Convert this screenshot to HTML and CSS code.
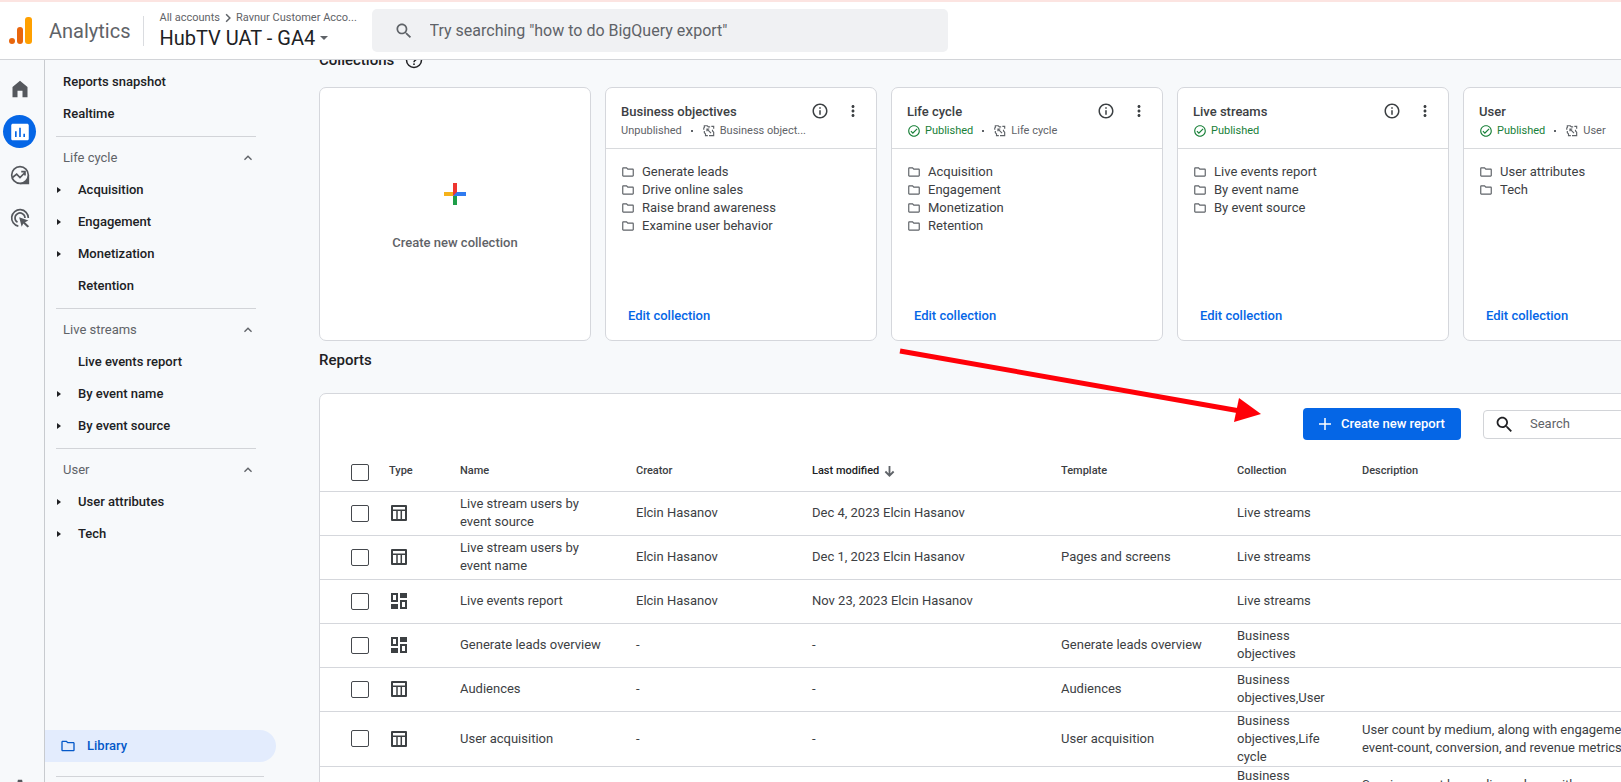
FILE: index.html
```html
<!DOCTYPE html>
<html lang="en">
<head>
  <meta charset="UTF-8">
  <meta name="viewport" content="width=device-width, initial-scale=1.0">
  <title>Analytics | Library</title>
  <link rel="stylesheet" href="styles.css">
</head>
<body>

  <!-- Icons -->
  <svg class="sprite" aria-hidden="true">
    <symbol id="folder" viewBox="0 0 24 24"><path d="M9.2 6l2 2H20v10H4V6h5.2M10 4H4c-1.100 0-2 .9-2 2v12c0 1.100.9 2 2 2h16c1.100 0 2-.9 2-2V8c0-1.100-.9-2-2-2h-8l-2-2z"/></symbol>
    <symbol id="info" viewBox="0 0 24 24"><path d="M11 7h2v2h-2zm0 4h2v6h-2zm1-9C6.480 2 2 6.480 2 12s4.480 10 10 10 10-4.480 10-10S17.520 2 12 2zm0 18c-4.410 0-8-3.590-8-8s3.590-8 8-8 8 3.590 8 8-3.590 8-8 8z"/></symbol>
    <symbol id="more" viewBox="0 0 24 24"><path d="M12 8c1.100 0 2-.9 2-2s-.9-2-2-2-2 .9-2 2 .9 2 2 2zm0 2c-1.100 0-2 .9-2 2s.9 2 2 2 2-.9 2-2-.9-2-2-2zm0 6c-1.100 0-2 .9-2 2s.9 2 2 2 2-.9 2-2-.9-2-2-2z"/></symbol>
    <symbol id="check" viewBox="0 0 24 24"><path d="M12 2C6.480 2 2 6.480 2 12s4.480 10 10 10 10-4.480 10-10S17.520 2 12 2zm0 18c-4.410 0-8-3.590-8-8s3.590-8 8-8 8 3.590 8 8-3.590 8-8 8zm4.590-12.420L10 14.170l-2.590-2.580L6 13l4 4 8-8z"/></symbol>
    <symbol id="linked" viewBox="0 0 24 24"><g fill="none" stroke="currentColor" stroke-width="2"><path d="M3 10V7l1-1V3h5l2 2h3M16 4h4v4M4 12v3l2 2v3h4M12 20h8v-6l-2-2v-2"/><path d="M9.500 9.500l6 6M8.500 12.500v-4h4"/></g></symbol>
    <symbol id="search" viewBox="0 0 24 24"><path d="M15.500 14h-.79l-.28-.27C15.410 12.590 16 11.110 16 9.500 16 5.910 13.090 3 9.500 3S3 5.910 3 9.500 5.910 16 9.500 16c1.610 0 3.090-.59 4.230-1.570l.27.28v.79l5 4.990L20.490 19l-4.990-5zm-6 0C7.010 14 5 11.990 5 9.500S7.010 5 9.500 5 14 7.010 14 9.500 11.990 14 9.500 14z"/></symbol>
    <symbol id="up" viewBox="0 0 24 24"><path d="M12 8l-6 6 1.410 1.410L12 10.830l4.590 4.580L18 14z"/></symbol>
    <symbol id="table" viewBox="0 0 18 18"><path fill="none" stroke="currentColor" stroke-width="2" stroke-linejoin="round" d="M2 2h14v14H2z"/><path fill="none" stroke="currentColor" stroke-width="1.500" d="M2 6.300h14M7 6v10M11.300 6v10"/></symbol>
    <symbol id="overview" viewBox="0 0 18 18"><path d="M10 1h7v5h-7zM1 12h7v5H1z"/><path fill="none" stroke="currentColor" stroke-width="2" d="M2 2h5v7H2zM11 9h5v7h-5z"/></symbol>
  </svg>

  <header class="topbar">
    <a class="brand" href="#">
      <svg class="logo" viewBox="0 0 24 28" aria-hidden="true">
        <rect x="16" y="0" width="7" height="27" rx="3" fill="#ffa000"/>
        <rect x="8" y="10" width="6" height="17" rx="3" fill="#e8660d"/>
        <circle cx="3" cy="24" r="3" fill="#e8660d"/>
      </svg>
      <span>Analytics</span>
    </a>
    <div class="account">
      <div class="crumbs">
        <a href="#">All accounts</a>
        <svg viewBox="0 0 8 12" aria-hidden="true"><path d="M1.500 1l5 5-5 5" fill="none" stroke="currentColor" stroke-width="2"/></svg>
        <a href="#">Ravnur Customer Acco...</a>
      </div>
      <button class="property">HubTV UAT - GA4
        <svg viewBox="0 0 8 4" aria-hidden="true"><path d="M0 0h8L4 4z"/></svg>
      </button>
    </div>
    <label class="global-search">
      <svg aria-hidden="true"><use href="#search"/></svg>
      <input type="search" aria-label="Search Analytics" placeholder="Try searching &quot;how to do BigQuery export&quot;">
    </label>
  </header>

  <div class="layout">
    <nav class="rail" aria-label="Main">
      <a href="#" aria-label="Home"><svg viewBox="0 0 24 24"><path d="M3 9.500L12 2l9 7.500V22h-6v-8H9v8H3z"/></svg></a>
      <a class="active" href="#" aria-label="Reports"><svg viewBox="0 0 24 24"><path fill-rule="evenodd" d="M3.500 2h17c1 0 2 .8 2 2v16c0 1.200-1 2-2 2h-17c-1 0-2-.8-2-2V4c0-1.200 1-2 2-2zM6 11v7h2v-7zm5-4v11h2V7zm5 7v4h2v-4z"/></svg></a>
      <a href="#" aria-label="Explore"><svg viewBox="0 0 24 24"><path d="M22 12v10H12" stroke="currentColor" stroke-width="2"/><circle cx="12" cy="12" r="10" fill="#f7f9fb" stroke="currentColor" stroke-width="2"/><path fill="none" stroke="currentColor" stroke-width="2" d="M3 15l5-4 4 4 6-6M13.500 8H18v4.500"/></svg></a>
      <a href="#" aria-label="Advertising"><svg viewBox="0 0 24 24"><path fill="none" stroke="currentColor" stroke-width="2" d="M10 21.800A10 10 0 1 1 22 12M9 17.200A6 6 0 1 1 18 12"/><path d="M11 11l11 4-4 2 5 5-2 1.500-5-5-2 4z"/></svg></a>
      <a class="admin" href="#" aria-label="Admin"><svg viewBox="0 0 24 24"><path d="M9.500 2h5l.6 3 2 1.200 2.900-1 2.400 4.200-2.300 2v1.300l2.300 2-2.400 4.200-2.900-1-2 1.200-.6 3h-5l-.6-3-2-1.200-2.900 1-2.400-4.200 2.300-2v-1.300l-2.300-2L4 5.200l2.900 1 2-1.200z"/></svg></a>
    </nav>

    <nav class="sidebar" aria-label="Reports">
      <a class="item top" href="#">Reports snapshot</a>
      <a class="item top" href="#">Realtime</a>
      <hr>
      <button class="group">Life cycle <svg><use href="#up"/></svg></button>
      <a class="item parent" href="#">Acquisition</a>
      <a class="item parent" href="#">Engagement</a>
      <a class="item parent" href="#">Monetization</a>
      <a class="item" href="#">Retention</a>
      <hr>
      <button class="group">Live streams <svg><use href="#up"/></svg></button>
      <a class="item" href="#">Live events report</a>
      <a class="item parent" href="#">By event name</a>
      <a class="item parent" href="#">By event source</a>
      <hr>
      <button class="group">User <svg><use href="#up"/></svg></button>
      <a class="item parent" href="#">User attributes</a>
      <a class="item parent" href="#">Tech</a>
      <div class="sidebar-bottom">
        <a class="library" href="#"><svg><use href="#folder"/></svg>Library</a>
        <hr>
      </div>
    </nav>

    <main>
      <h2 class="collections-title">Collections
        <svg viewBox="0 0 24 24" aria-hidden="true"><circle cx="12" cy="12" r="10" fill="none" stroke="currentColor" stroke-width="2"/><path d="M9 10a3 3 0 1 1 4.500 2.600c-1 .6-1.500 1.200-1.500 2.400" fill="none" stroke="currentColor" stroke-width="2"/><circle cx="12" cy="17.500" r="1.200"/></svg>
      </h2>

      <section class="cards">
        <button class="card create">
          <svg viewBox="0 0 22 22" aria-hidden="true"><path fill="#f5b21b" d="M0 9h9v4H0z"/><path fill="#2f7bf0" d="M11 9h11v4H9z"/><path fill="#1e9e48" d="M9 13h4v9H9z"/><path fill="#ee3530" d="M9 0h4v9l-4 4z"/></svg>
          Create new collection
        </button>

        <article class="card">
          <div class="card-head">
            <h3>Business objectives</h3>
            <button aria-label="Details"><svg><use href="#info"/></svg></button>
            <button aria-label="More"><svg><use href="#more"/></svg></button>
            <p class="status">Unpublished <span class="dot"></span> <svg><use href="#linked"/></svg> Business object...</p>
          </div>
          <ul>
            <li><svg><use href="#folder"/></svg>Generate leads</li>
            <li><svg><use href="#folder"/></svg>Drive online sales</li>
            <li><svg><use href="#folder"/></svg>Raise brand awareness</li>
            <li><svg><use href="#folder"/></svg>Examine user behavior</li>
          </ul>
          <a class="edit" href="#">Edit collection</a>
        </article>

        <article class="card">
          <div class="card-head">
            <h3>Life cycle</h3>
            <button aria-label="Details"><svg><use href="#info"/></svg></button>
            <button aria-label="More"><svg><use href="#more"/></svg></button>
            <p class="status"><span class="published"><svg><use href="#check"/></svg> Published</span> <span class="dot"></span> <svg><use href="#linked"/></svg> Life cycle</p>
          </div>
          <ul>
            <li><svg><use href="#folder"/></svg>Acquisition</li>
            <li><svg><use href="#folder"/></svg>Engagement</li>
            <li><svg><use href="#folder"/></svg>Monetization</li>
            <li><svg><use href="#folder"/></svg>Retention</li>
          </ul>
          <a class="edit" href="#">Edit collection</a>
        </article>

        <article class="card">
          <div class="card-head">
            <h3>Live streams</h3>
            <button aria-label="Details"><svg><use href="#info"/></svg></button>
            <button aria-label="More"><svg><use href="#more"/></svg></button>
            <p class="status"><span class="published"><svg><use href="#check"/></svg> Published</span></p>
          </div>
          <ul>
            <li><svg><use href="#folder"/></svg>Live events report</li>
            <li><svg><use href="#folder"/></svg>By event name</li>
            <li><svg><use href="#folder"/></svg>By event source</li>
          </ul>
          <a class="edit" href="#">Edit collection</a>
        </article>

        <article class="card">
          <div class="card-head">
            <h3>User</h3>
            <button aria-label="Details"><svg><use href="#info"/></svg></button>
            <button aria-label="More"><svg><use href="#more"/></svg></button>
            <p class="status"><span class="published"><svg><use href="#check"/></svg> Published</span> <span class="dot"></span> <svg><use href="#linked"/></svg> User</p>
          </div>
          <ul>
            <li><svg><use href="#folder"/></svg>User attributes</li>
            <li><svg><use href="#folder"/></svg>Tech</li>
          </ul>
          <a class="edit" href="#">Edit collection</a>
        </article>
      </section>

      <h2 class="reports-title">Reports</h2>

      <section class="reports">
        <div class="toolbar">
          <button class="new-report">
            <svg viewBox="0 0 12 12" aria-hidden="true"><path d="M6 0v12M0 6h12" stroke="currentColor" stroke-width="1.500"/></svg>
            Create new report
          </button>
          <label class="table-search">
            <svg aria-hidden="true"><use href="#search"/></svg>
            <input type="search" aria-label="Search reports" placeholder="Search">
          </label>
        </div>
        <table>
          <colgroup>
            <col class="c-check"><col class="c-type"><col class="c-name"><col class="c-name"><col class="c-modified"><col class="c-name"><col class="c-collection"><col>
          </colgroup>
          <thead>
            <tr>
              <th><input type="checkbox" aria-label="Select all"></th>
              <th>Type</th>
              <th>Name</th>
              <th>Creator</th>
              <th class="sorted">Last modified <svg viewBox="0 0 12 12" aria-hidden="true"><path d="M6 0v10M1.500 6L6 10.500 10.500 6" fill="none" stroke="currentColor" stroke-width="2"/></svg></th>
              <th>Template</th>
              <th>Collection</th>
              <th>Description</th>
            </tr>
          </thead>
          <tbody>
            <tr>
              <td><input type="checkbox" aria-label="Select Live stream users by event source"></td>
              <td><svg><use href="#table"/></svg></td>
              <td>Live stream users by event source</td>
              <td>Elcin Hasanov</td>
              <td>Dec 4, 2023 Elcin Hasanov</td>
              <td></td>
              <td>Live streams</td>
              <td></td>
            </tr>
            <tr>
              <td><input type="checkbox" aria-label="Select Live stream users by event name"></td>
              <td><svg><use href="#table"/></svg></td>
              <td>Live stream users by event name</td>
              <td>Elcin Hasanov</td>
              <td>Dec 1, 2023 Elcin Hasanov</td>
              <td>Pages and screens</td>
              <td>Live streams</td>
              <td></td>
            </tr>
            <tr>
              <td><input type="checkbox" aria-label="Select Live events report"></td>
              <td><svg><use href="#overview"/></svg></td>
              <td>Live events report</td>
              <td>Elcin Hasanov</td>
              <td>Nov 23, 2023 Elcin Hasanov</td>
              <td></td>
              <td>Live streams</td>
              <td></td>
            </tr>
            <tr>
              <td><input type="checkbox" aria-label="Select Generate leads overview"></td>
              <td><svg><use href="#overview"/></svg></td>
              <td>Generate leads overview</td>
              <td>-</td>
              <td>-</td>
              <td>Generate leads overview</td>
              <td>Business objectives</td>
              <td></td>
            </tr>
            <tr>
              <td><input type="checkbox" aria-label="Select Audiences"></td>
              <td><svg><use href="#table"/></svg></td>
              <td>Audiences</td>
              <td>-</td>
              <td>-</td>
              <td>Audiences</td>
              <td>Business objectives,User</td>
              <td></td>
            </tr>
            <tr>
              <td><input type="checkbox" aria-label="Select User acquisition"></td>
              <td><svg><use href="#table"/></svg></td>
              <td>User acquisition</td>
              <td>-</td>
              <td>-</td>
              <td>User acquisition</td>
              <td>Business objectives,Life cycle</td>
              <td>User count by medium, along with engagement, event-count, conversion, and revenue metrics</td>
            </tr>
            <tr>
              <td><input type="checkbox" aria-label="Select Traffic acquisition"></td>
              <td><svg><use href="#table"/></svg></td>
              <td>Traffic acquisition</td>
              <td>-</td>
              <td>-</td>
              <td>Traffic acquisition</td>
              <td>Business objectives,Life cycle</td>
              <td>Session count by medium, along with engagement, event-count, conversion, and revenue metrics</td>
            </tr>
          </tbody>
        </table>
      </section>
    </main>
  </div>

  <!-- Callout pointing at the create button -->
  <svg class="callout" viewBox="0 0 364 76" aria-hidden="true">
    <path d="M1 4l340 60" stroke="#ff0008" stroke-width="5"/>
    <path d="M340 51l22 16-27 8z" fill="#ff0008"/>
  </svg>

</body>
</html>
```

FILE: styles.css
```css
* {
  box-sizing: border-box;
}
body {
  margin: 0;
  height: 100vh;
  display: flex;
  flex-direction: column;
  overflow: hidden;
  position: relative;
  background: #f7f9fb;
  color: #3c4043;
  font-family: Roboto, "Liberation Sans", sans-serif;
  font-size: 13px;
  line-height: 18px;
}
a {
  color: inherit;
  text-decoration: none;
}
button, input {
  font: inherit;
  color: inherit;
  border: none;
  background: none;
  padding: 0;
}
button {
  cursor: pointer;
}
h2, h3, p, ul {
  margin: 0;
  padding: 0;
}
svg {
  fill: currentColor;
  flex: none;
}
.sprite {
  display: none;
}

/* Header */
.topbar {
  flex: none;
  display: flex;
  align-items: center;
  height: 60px;
  background: #fff;
  border-top: 2px solid #fce4e1;
  border-bottom: 1px solid #d2d4d8;
}
.brand {
  display: flex;
  align-items: center;
  gap: 16px;
  padding: 0 12px 0 9px;
  color: #5f6368;
  font-size: 20px;
}
.logo {
  width: 24px;
  height: 28px;
}
.account {
  flex: none;
  border-left: 1px solid #dadce0;
  height: 30px;
  display: flex;
  flex-direction: column;
  justify-content: center;
  padding: 0 0 2px 16px;
  width: 229px;
  white-space: nowrap;
}
.crumbs {
  display: flex;
  align-items: center;
  gap: 5px;
  font-size: 11px;
  line-height: 16px;
  color: #5f6368;
}
.crumbs svg {
  width: 6px;
  height: 10px;
}
.property {
  display: flex;
  align-items: center;
  gap: 5px;
  font-size: 20px;
  line-height: 24px;
  color: #202124;
}
.property svg {
  width: 8px;
  height: 4px;
  color: #5f6368;
}
.global-search {
  display: flex;
  align-items: center;
  gap: 16px;
  width: 100%;
  max-width: 576px;
  height: 43px;
  padding: 0 22px;
  border-radius: 5px;
  background: #f0f1f3;
}
.global-search svg {
  width: 20px;
  height: 20px;
  color: #5f6368;
}
.global-search input {
  flex: 1;
  font-size: 16px;
  outline: none;
}
input::placeholder {
  color: #5f6368;
  opacity: 1;
}

.layout {
  flex: 1;
  min-height: 0;
  display: flex;
}

/* Icon rail */
.rail {
  flex: none;
  width: 45px;
  display: flex;
  flex-direction: column;
  gap: 10px;
  padding: 12px 0 0 3px;
  border-right: 1px solid #c8cbcf;
  color: #55585d;
}
.rail a {
  display: flex;
  align-items: center;
  justify-content: center;
  width: 33px;
  height: 33px;
  border-radius: 50%;
}
.rail svg {
  width: 20px;
  height: 20px;
}
.rail .active {
  background: #0566e6;
  color: #fff;
}
.rail .admin {
  margin-top: auto;
  margin-bottom: -22px;
}

/* Sidebar */
.sidebar {
  flex: none;
  width: 274px;
  display: flex;
  flex-direction: column;
  padding-top: 6px;
  color: #202124;
}
.sidebar hr {
  flex: none;
  width: 200px;
  margin: 6px 0 5px 11px;
  border: none;
  border-top: 1px solid #d2d4d8;
}
.item {
  display: flex;
  align-items: center;
  height: 32px;
  padding-left: 33px;
  font-weight: 500;
}
.item.top {
  padding-left: 18px;
}
.parent {
  padding-left: 12px;
}
.parent::before {
  content: "";
  width: 21px;
  height: 6px;
  background: #202124;
  clip-path: polygon(0 0, 4px 50%, 0 100%);
}
.group {
  display: flex;
  align-items: center;
  justify-content: space-between;
  width: 211px;
  height: 32px;
  padding-left: 18px;
  color: #5f6368;
}
.group svg {
  width: 16px;
  height: 16px;
}
.sidebar-bottom {
  margin-top: auto;
}
.library {
  display: flex;
  align-items: center;
  gap: 11px;
  width: 231px;
  height: 32px;
  padding-left: 15px;
  border-radius: 0 16px 16px 0;
  background: #e3ecfd;
  color: #0559c9;
  font-weight: 500;
}
.library svg {
  width: 16px;
  height: 16px;
}
.sidebar-bottom hr {
  width: 208px;
  margin-top: 14px;
}

/* Main */
main {
  flex: 1;
  min-width: 0;
  overflow: hidden;
}
h2 {
  color: #202124;
  font-size: 15px;
  font-weight: 500;
  line-height: 20px;
}
.collections-title {
  display: flex;
  align-items: center;
  gap: 11px;
  margin-top: -10px;
}
.collections-title svg {
  width: 18px;
  height: 18px;
}
.cards {
  display: flex;
  gap: 14px;
  margin-top: 17px;
}
.card {
  flex: none;
  display: flex;
  flex-direction: column;
  width: 272px;
  height: 254px;
  border: 1px solid #d5d7dc;
  border-radius: 7px;
  background: #fff;
}
.create {
  align-items: center;
  justify-content: center;
  gap: 29px;
  padding-top: 7px;
  color: #5f6368;
  font-weight: 500;
}
.create svg {
  width: 22px;
  height: 22px;
}
.card-head {
  display: grid;
  grid-template-columns: 1fr 18px 18px;
  column-gap: 15px;
  padding: 14px 14px 8px 15px;
  border-bottom: 1px solid #d8dadd;
}
.card-head h3 {
  font-size: 13px;
  font-weight: 500;
  line-height: 20px;
}
.card-head button, .card-head button svg {
  width: 18px;
  height: 18px;
}
.status {
  grid-column: 1 / -1;
  display: flex;
  align-items: center;
  gap: 4px;
  font-size: 11px;
  line-height: 18px;
  color: #5f6368;
}
.status svg {
  width: 14px;
  height: 14px;
}
.published {
  display: flex;
  align-items: center;
  gap: 4px;
  color: #188038;
}
.dot {
  width: 2px;
  height: 2px;
  margin: 0 5px;
  background: #5f6368;
}
.card ul {
  flex: 1;
  list-style: none;
  padding: 14px 15px;
}
.card li {
  display: flex;
  align-items: center;
  gap: 7px;
}
.card li svg {
  width: 14px;
  height: 14px;
  color: #5f6368;
}
.edit {
  align-self: flex-start;
  margin: 0 22px 15px;
  color: #0566e6;
  font-weight: 500;
}
.reports-title {
  margin: 9px 0 23px;
}

/* Reports table */
.reports {
  min-width: 1370px;
  border: 1px solid #d5d7dc;
  border-radius: 7px;
  background: #fff;
}
.toolbar {
  display: flex;
  align-items: center;
  gap: 22px;
  height: 60px;
  padding-left: 983px;
}
.new-report {
  flex: none;
  display: flex;
  align-items: center;
  justify-content: center;
  gap: 10px;
  min-width: 158px;
  height: 32px;
  border-radius: 4px;
  background: #0566e6;
  color: #fff;
  font-weight: 500;
  white-space: nowrap;
}
.new-report svg {
  width: 12px;
  height: 12px;
}
.table-search {
  flex: 1;
  display: flex;
  align-items: center;
  gap: 15px;
  height: 29px;
  margin-right: 16px;
  padding: 0 10px;
  border: 1px solid #d2d4d8;
  border-radius: 4px;
}
.table-search svg {
  width: 21px;
  height: 21px;
  color: #202124;
}
.table-search input {
  width: 100px;
}
table {
  width: 100%;
  table-layout: fixed;
  border-collapse: collapse;
}
th, td {
  height: 44px;
  padding: 0 24px 0 0;
  border-bottom: 1px solid #d5d7dc;
  text-align: left;
}
th {
  height: 37px;
  padding-bottom: 2px;
  font-size: 11px;
  font-weight: 500;
}
th:first-child, td:first-child {
  padding: 0 0 0 31px;
}
tbody tr:last-child td {
  border-bottom: none;
}
.c-check {
  width: 69px;
}
.c-type {
  width: 71px;
}
.c-name {
  width: 176px;
}
.c-modified {
  width: 249px;
}
.c-collection {
  width: 125px;
}
td svg {
  display: block;
  width: 18px;
  height: 18px;
  margin-left: 1px;
}
.sorted {
  color: #202124;
}
.sorted svg {
  width: 11px;
  height: 11px;
  margin-left: 2px;
  vertical-align: middle;
  color: #5f6368;
}
input[type="checkbox"] {
  appearance: none;
  display: block;
  width: 18px;
  height: 17px;
  margin: 0;
  border: 1px solid #45484d;
  border-radius: 2px;
}

.callout {
  position: absolute;
  left: 899px;
  top: 347px;
  width: 364px;
  height: 76px;
}
```
